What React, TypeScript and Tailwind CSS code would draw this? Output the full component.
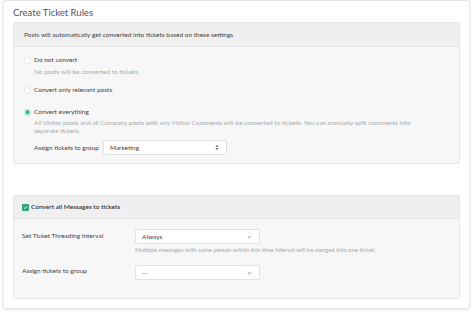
import React from 'react';

const Radio = ({ checked }: { checked?: boolean }) =>
    checked ? (
        <span className="w-[7px] h-[7px] rounded-full bg-[#bfe8d8] flex items-center justify-center shrink-0">
            <span className="w-[3.5px] h-[3.5px] rounded-full bg-[#2fae82]" />
        </span>
    ) : (
        <span className="w-[7px] h-[7px] rounded-full bg-white border border-[#e4e4e4] shrink-0" />
    );

const Select = ({ value, width, arrow }: { value: string; width: string; arrow: 'updown' | 'down' }) => (
    <div className={`${width} h-[15px] bg-white border border-[#e2e2e2] rounded-[2px] flex items-center justify-between pl-[6px] pr-[7px] text-[6.5px] text-[#444]`}>
        <span>{value}</span>
        {arrow === 'updown' ? (
            <svg width="4" height="7" viewBox="0 0 4 7">
                <path d="M0.5 2.8 L2 1 L3.5 2.8 Z M0.5 4.2 L2 6 L3.5 4.2 Z" fill="#555" />
            </svg>
        ) : (
            <svg width="5" height="4" viewBox="0 0 5 4">
                <path d="M0.8 1.2 L2.5 2.8 L4.2 1.2" fill="none" stroke="#777" strokeWidth="0.8" />
            </svg>
        )}
    </div>
);

const App: React.FC = () => {
    return (
        <div className="w-[474px] h-[314px] bg-white" style={{ fontFamily: 'Lato, "Open Sans", sans-serif' }}>
            <div className="ml-[3px] w-[467px] h-[309px] bg-white border border-[#e8e8e8] rounded-[3px] shadow-[0_1px_3px_rgba(0,0,0,0.12)] px-[9px]">
                <div className="h-[21px] pt-[5px] text-[9.5px] leading-[13px] text-[#555]">Create Ticket Rules</div>

                {/* Posts panel */}
                <div className="h-[142px] border border-[#e6e6e6] rounded-[2px] bg-[#f7f7f7]">
                    <div className="h-[24px] bg-[#efefef] border-b border-[#e6e6e6] flex items-center pl-[10px] text-[6.5px] text-[#444]">
                        Posts will automatically get converted into tickets based on these settings
                    </div>
                    <div className="pl-[10px] pt-[9px] text-[6.5px]">
                        <div className="flex items-center gap-[3px] h-[8px]">
                            <Radio />
                            <span className="text-[#444]">Do not convert</span>
                        </div>
                        <div className="pl-[10px] h-[8px] mt-[4px] leading-[8px] text-[#aaa]">No posts will be converted to tickets.</div>
                        <div className="flex items-center gap-[3px] h-[8px] mt-[10px]">
                            <Radio />
                            <span className="text-[#444]">Convert only relevant posts</span>
                        </div>
                        <div className="flex items-center gap-[3px] h-[8px] mt-[14px]">
                            <Radio checked />
                            <span className="text-[#444]">Convert everything</span>
                        </div>
                        <div className="pl-[10px] mt-[3px] leading-[8px] text-[#aaa] w-[410px]">
                            All Visitor posts and all Company posts with any Visitor Comments will be converted to tickets. You can manually split comments into separate tickets.
                        </div>
                        <div className="flex items-center pl-[10px] mt-[5px] gap-[4px]">
                            <span className="text-[#444]">Assign tickets to group</span>
                            <Select value="Marketing" width="w-[124px]" arrow="updown" />
                        </div>
                    </div>
                </div>

                {/* Messages panel */}
                <div className="mt-[31px] h-[104px] border border-[#e6e6e6] rounded-[2px] bg-[#f7f7f7]">
                    <div className="h-[23px] bg-[#efefef] border-b border-[#e6e6e6] flex items-center pl-[8px] gap-[2px] text-[6.5px] text-[#333] font-semibold">
                        <span className="w-[7px] h-[7px] rounded-[1px] bg-[#2fa67a] flex items-center justify-center">
                            <svg width="5" height="5" viewBox="0 0 5 5">
                                <path d="M0.9 2.6 L2 3.6 L4.1 1.3" fill="none" stroke="white" strokeWidth="0.9" />
                            </svg>
                        </span>
                        <span>Convert all Messages to tickets</span>
                    </div>
                    <div className="pl-[8px] pt-[10px] text-[6.5px] text-[#444]">
                        <div className="flex">
                            <span className="w-[113px] pt-[2px]">Set Ticket Threading Interval</span>
                            <div>
                                <Select value="Always" width="w-[125px]" arrow="down" />
                                <div className="mt-[2px] text-[6px] text-[#aaa] leading-[8px]">
                                    Multiple messages with same person within this time interval will be merged into one ticket.
                                </div>
                            </div>
                        </div>
                        <div className="flex mt-[11px]">
                            <span className="w-[113px] pt-[1px]">Assign tickets to group</span>
                            <Select value="--" width="w-[125px]" arrow="down" />
                        </div>
                    </div>
                </div>
            </div>
        </div>
    );
};

export default App;
